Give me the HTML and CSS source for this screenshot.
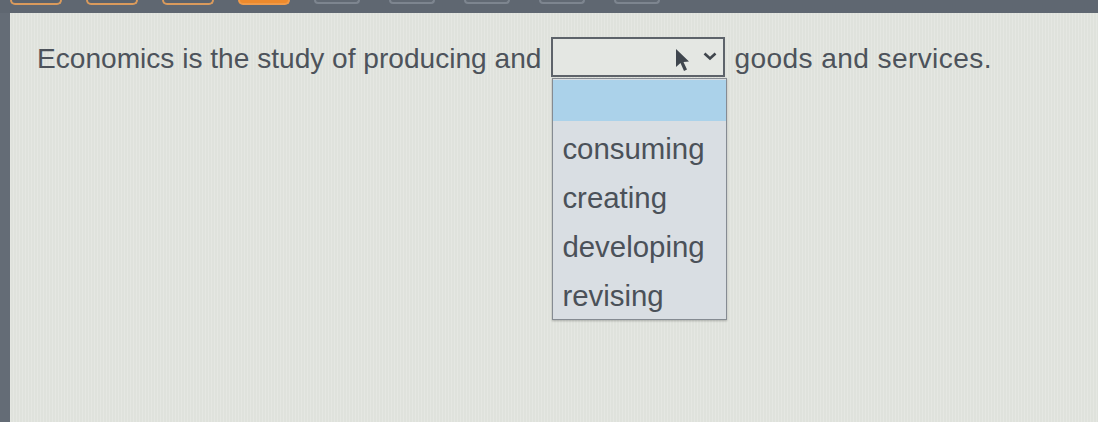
FILE: index.html
```html
<!DOCTYPE html>
<html lang="en">
<head>
<meta charset="utf-8">
<title>Economics question</title>
<link rel="stylesheet" href="styles.css">
</head>
<body>
<div class="topbar">
  <span class="tab tab-done"></span>
  <span class="tab tab-done"></span>
  <span class="tab tab-done"></span>
  <span class="tab tab-current"></span>
  <span class="tab tab-todo"></span>
  <span class="tab tab-todo"></span>
  <span class="tab tab-todo"></span>
  <span class="tab tab-todo"></span>
  <span class="tab tab-todo"></span>
</div>
<div class="screen">
  <div class="content">
    <p class="sentence">
      <span class="words">Economics is the study of producing and</span>
      <span class="select-wrap">
        <span class="select">
          <svg class="cursor" width="16" height="24" viewBox="0 0 16 24"><path d="M2 1 L2 19 L6.5 15 L10 23 L13 21.5 L9.5 14 L15 13.5 Z" fill="#3f464e"/></svg>
          <svg class="chevron" width="16" height="10" viewBox="0 0 16 10"><path d="M2.5 2.5 L8 7.5 L13.5 2.5" fill="none" stroke="#40464d" stroke-width="2.6"/></svg>
        </span>
        <span class="menu">
          <span class="opt opt-blank"></span>
          <span class="opt">consuming</span>
          <span class="opt">creating</span>
          <span class="opt">developing</span>
          <span class="opt">revising</span>
        </span>
      </span>
      <span class="words">goods and services.</span>
    </p>
  </div>
</div>
</body>
</html>
```
FILE: styles.css
```css
html, body {
  margin: 0;
  padding: 0;
  height: 100%;
}
body {
  background: #646c76;
  font-family: "Liberation Sans", Arial, sans-serif;
  overflow: hidden;
  display: flex;
  flex-direction: column;
}
.topbar {
  height: 13px;
  flex: none;
  display: flex;
  gap: 24px;
  padding-left: 10px;
  background: #5f6771;
}
.tab {
  width: 52px;
  height: 5px;
  border: 2px solid #d99a5c;
  border-top: none;
  border-radius: 0 0 7px 7px;
  background: #5a626c;
  box-sizing: border-box;
}
.tab-current {
  background: #ee8a2c;
  border-color: #f09a48;
}
.tab-todo {
  width: 46px;
  height: 4px;
  border-color: #7d858f;
  background: #616973;
}
.topbar .tab-todo { margin-right: 5px; }
.screen {
  flex: 1;
  margin-left: 10px;
  background: #dfe2dc;
  background-image: repeating-linear-gradient(90deg, rgba(255,255,255,0.18) 0 1px, rgba(0,0,0,0) 1px 3px);
}
.content {
  padding: 24px 0 0 27px;
}
.sentence {
  margin: 0;
  display: flex;
  align-items: center;
  font-size: 28.1px;
  color: #4d535b;
}
.words {
  padding-top: 4px;
}
.words + .select-wrap + .words {
  letter-spacing: 0.4px;
}
.select-wrap {
  position: relative;
  margin: 0 9px 0 10px;
}
.select {
  display: flex;
  align-items: center;
  justify-content: flex-end;
  width: 174px;
  height: 40px;
  box-sizing: border-box;
  border: 2px solid #5d636a;
  background: #e4e7e3;
  padding-right: 5px;
}
.cursor {
  margin-right: 12px;
  margin-top: 6px;
}
.chevron {
  margin-top: -2px;
}
.menu {
  position: absolute;
  left: 1px;
  top: 41px;
  width: 175px;
  height: 242px;
  box-sizing: border-box;
  border: 1px solid #858b92;
  background: #d9dee3;
  box-shadow: 0 1px 2px rgba(0,0,0,0.25);
  display: flex;
  flex-direction: column;
  padding-top: 1px;
}
.opt {
  display: flex;
  align-items: center;
  height: 49px;
  padding: 6px 0 0 9px;
  box-sizing: border-box;
  font-size: 29.4px;
  color: #4b5159;
}
.opt-blank {
  height: 41px;
  padding: 0;
  background: #abd2ea;
  flex: none;
}
```
